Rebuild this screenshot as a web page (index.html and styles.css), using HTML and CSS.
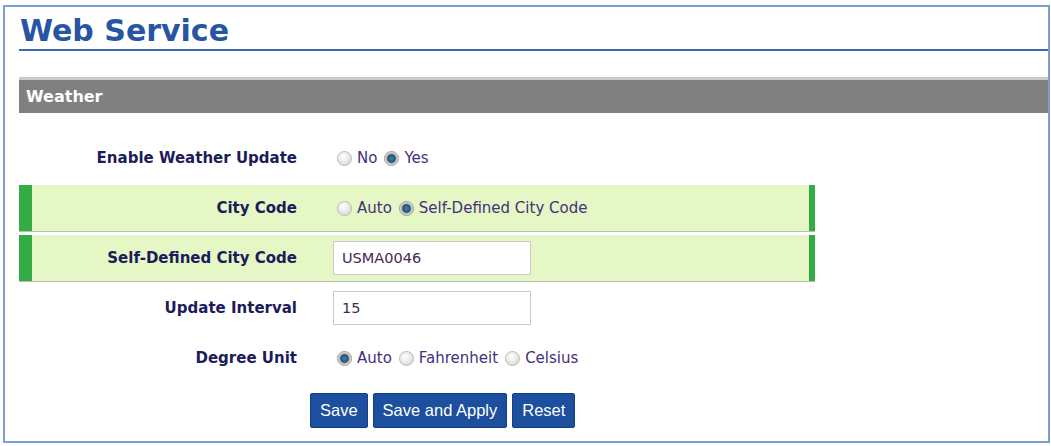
FILE: index.html
```html
<!DOCTYPE html>
<html lang="en">

<head>
    <meta charset="UTF-8">
    <meta name="viewport" content="width=device-width, initial-scale=1.0">
    <title>Web Service</title>
    <link rel="stylesheet" href="styles.css">
</head>

<body>
    <div class="frame">
        <h1 class="page-title">Web Service</h1>

        <div class="section-bar">Weather</div>

        <form class="settings">
            <div class="row">
                <label class="row-label">Enable Weather Update</label>
                <div class="row-value">
                    <label class="opt"><input type="radio" name="enable"> No</label>
                    <label class="opt"><input type="radio" name="enable" checked> Yes</label>
                </div>
            </div>

            <div class="row row-highlight">
                <label class="row-label">City Code</label>
                <div class="row-value">
                    <label class="opt"><input type="radio" name="city"> Auto</label>
                    <label class="opt"><input type="radio" name="city" checked> Self-Defined City Code</label>
                </div>
            </div>

            <div class="row row-highlight">
                <label class="row-label" for="cityCode">Self-Defined City Code</label>
                <div class="row-value">
                    <input type="text" class="text-field" id="cityCode" value="USMA0046">
                </div>
            </div>

            <div class="row">
                <label class="row-label" for="interval">Update Interval</label>
                <div class="row-value">
                    <input type="text" class="text-field" id="interval" value="15">
                </div>
            </div>

            <div class="row">
                <label class="row-label">Degree Unit</label>
                <div class="row-value">
                    <label class="opt"><input type="radio" name="unit" checked> Auto</label>
                    <label class="opt"><input type="radio" name="unit"> Fahrenheit</label>
                    <label class="opt"><input type="radio" name="unit"> Celsius</label>
                </div>
            </div>

            <div class="actions">
                <button type="button" class="btn">Save</button>
                <button type="button" class="btn">Save and Apply</button>
                <button type="reset" class="btn">Reset</button>
            </div>
        </form>
    </div>
</body>

</html>
```

FILE: styles.css
```css
body {
    margin: 0;
    background-color: #fff;
    font-family: "DejaVu Sans", Verdana, sans-serif;
}

/* Cornice esterna */
.frame {
    margin: 5px 1px 0 3px;
    height: 434px;
    border: 2px solid #7c9fd5;
    padding-left: 14px;
    overflow: hidden;
}

.page-title {
    margin: 0;
    padding: 6px 0 0 1px;
    font-size: 30px;
    line-height: 36px;
    font-weight: bold;
    color: #2655a3;
    border-bottom: 2px solid #3d68b0;
}

.section-bar {
    margin-top: 26px;
    height: 33px;
    line-height: 33px;
    border-top: 3px solid #cbcbcb;
    background-color: #808080;
    color: #fff;
    font-size: 16px;
    font-weight: bold;
    padding-left: 7px;
}

/* Righe del modulo */
.settings {
    margin-top: 22px;
    width: 796px;
}

.row {
    display: flex;
    align-items: center;
    height: 46px;
    margin-bottom: 4px;
    border-left: 13px solid transparent;
    border-right: 6px solid transparent;
    box-sizing: border-box;
}

.row-highlight {
    background-color: #e5f7c5;
    border-left-color: #33ad43;
    border-right-color: #33ad43;
    box-shadow: 0 1px 0 #b9bfae;
}

.row-label {
    width: 265px;
    text-align: right;
    font-size: 15px;
    font-weight: bold;
    color: #1c1b5c;
}

.row-value {
    display: flex;
    align-items: center;
    padding-left: 36px;
    font-size: 15px;
    color: #45307c;
}

.opt {
    display: flex;
    align-items: center;
    margin-right: 3px;
}

.opt input {
    appearance: none;
    -webkit-appearance: none;
    width: 15px;
    height: 15px;
    margin: 0 5px 0 4px;
    border: 1px solid #b9b9b9;
    border-radius: 50%;
    background: radial-gradient(circle at 40% 35%, #fff 0, #e9e9e9 50%, #cfcfcf 100%);
}

.opt input:checked {
    border-color: #9a9a9a;
    background: radial-gradient(circle, #2a86b4 0, #1d6d98 2.5px, #3c4a5c 3.5px, #7d8791 4.5px, #d6d6d6 5.5px, #e6e6e6 100%);
}

.text-field {
    width: 198px;
    height: 34px;
    box-sizing: border-box;
    border: 1px solid #c9c9c9;
    padding: 0 8px;
    font-family: "DejaVu Sans", Verdana, sans-serif;
    font-size: 14.5px;
    color: #432a4e;
    background-color: #fff;
}

.actions {
    display: flex;
    gap: 5px;
    margin-top: 12px;
    padding-left: 291px;
}

.btn {
    height: 35px;
    padding: 0 9px;
    background-color: #1c4f9d;
    border: 1px solid #143f80;
    border-radius: 2px;
    color: #fff;
    font-family: "Liberation Sans", Arial, sans-serif;
    font-size: 16.5px;
    cursor: pointer;
}
```
